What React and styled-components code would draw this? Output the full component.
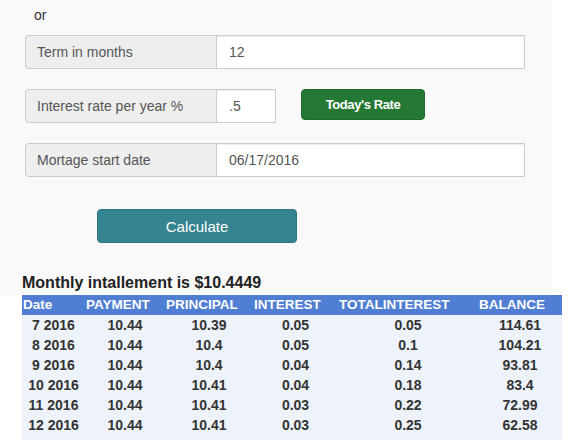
import React from 'react';
import styled, { createGlobalStyle } from 'styled-components';

const GlobalStyle = createGlobalStyle`
  html, body {
    margin: 0;
    padding: 0;
    background: #ffffff;
  }
  body {
    font-family: "Liberation Sans", Arial, sans-serif;
    font-size: 14px;
    line-height: 20px;
    color: #333;
  }
`;

const Panel = styled.div`
  width: 552px;
  background-color: #f9f9f9;
  padding: 5px 0 3px 0;
  box-sizing: border-box;
`;

const OrText = styled.div`
  margin-left: 34px;
  height: 20px;
`;

const Form = styled.div`
  display: flex;
  flex-direction: column;
  gap: 20px;
  margin: 10px 0 0 25px;
`;

const Row = styled.div`
  display: flex;
  align-items: center;
`;

const InputGroup = styled.div`
  display: flex;
  height: 34px;
  width: ${(p) => p.width}px;
  box-sizing: border-box;
`;

const Addon = styled.span`
  display: flex;
  align-items: center;
  width: 191px;
  flex: none;
  box-sizing: border-box;
  padding: 0 11px;
  background-color: #eeeeee;
  border: 1px solid #cccccc;
  border-right: none;
  border-radius: 4px 0 0 4px;
  color: #555;
  font-size: 14px;
`;

const Field = styled.div`
  display: flex;
  align-items: center;
  flex: 1;
  box-sizing: border-box;
  padding: 0 12px;
  background-color: #ffffff;
  border: 1px solid #cccccc;
  color: #555;
  font-size: 14px;
  box-shadow: inset 0 1px 1px rgba(0, 0, 0, 0.075);
`;

const RateButton = styled.button`
  margin-left: 25px;
  width: 124px;
  height: 31px;
  align-self: flex-start;
  background-color: #257833;
  border: 1px solid #1f6a2c;
  border-radius: 4px;
  color: #ffffff;
  font-family: "Liberation Sans", Arial, sans-serif;
  font-weight: bold;
  font-size: 13px;
  letter-spacing: -0.4px;
  cursor: pointer;
`;

const CalcButton = styled.button`
  display: block;
  margin: 32px 0 0 97px;
  width: 200px;
  height: 34px;
  background-color: #368491;
  border: 1px solid #2f7682;
  border-radius: 4px;
  color: #ffffff;
  font-family: "Liberation Sans", Arial, sans-serif;
  font-size: 15px;
  cursor: pointer;
`;

const Heading = styled.h4`
  margin: 31px 0 0 22px;
  font-size: 16px;
  line-height: 18px;
  font-weight: bold;
  color: #222;
`;

const Table = styled.table`
  margin: 0 0 0 22px;
  width: 540px;
  border-collapse: collapse;
  table-layout: fixed;
  background-color: #eef3fb;
`;

const HeadCell = styled.th`
  height: 20px;
  padding: 0 1px;
  background-color: #4f7ed2;
  color: #ffffff;
  text-align: left;
  font-size: 13.5px;
  font-weight: bold;
  white-space: nowrap;
  overflow: hidden;
`;

const Cell = styled.td`
  height: 20px;
  padding: 0;
  text-align: center;
  font-size: 14px;
  font-weight: bold;
  color: #333;
`;

const columns = [
  { label: 'Date', width: 63 },
  { label: 'PAYMENT', width: 80 },
  { label: 'PRINCIPAL', width: 88 },
  { label: 'INTEREST', width: 85 },
  { label: 'TOTALINTEREST', width: 140 },
  { label: 'BALANCE', width: 84 },
];

const rows = [
  ['7 2016', '10.44', '10.39', '0.05', '0.05', '114.61'],
  ['8 2016', '10.44', '10.4', '0.05', '0.1', '104.21'],
  ['9 2016', '10.44', '10.4', '0.04', '0.14', '93.81'],
  ['10 2016', '10.44', '10.41', '0.04', '0.18', '83.4'],
  ['11 2016', '10.44', '10.41', '0.03', '0.22', '72.99'],
  ['12 2016', '10.44', '10.41', '0.03', '0.25', '62.58'],
  ['1 2017', '10.44', '10.42', '0.02', '0.27', '52.16'],
];

const App = () => {
  return (
    <>
      <GlobalStyle />
      <Panel>
        <OrText>or</OrText>
        <Form>
          <InputGroup width={500}>
            <Addon>Term in months</Addon>
            <Field>12</Field>
          </InputGroup>
          <Row>
            <InputGroup width={251}>
              <Addon>Interest rate per year %</Addon>
              <Field>.5</Field>
            </InputGroup>
            <RateButton>Today's Rate</RateButton>
          </Row>
          <InputGroup width={500}>
            <Addon>Mortage start date</Addon>
            <Field>06/17/2016</Field>
          </InputGroup>
        </Form>
        <CalcButton>Calculate</CalcButton>
        <Heading>Monthly intallement is $10.4449</Heading>
      </Panel>
      <Table>
        <colgroup>
          {columns.map((c) => (
            <col key={c.label} style={{ width: c.width }} />
          ))}
        </colgroup>
        <thead>
          <tr>
            {columns.map((c) => (
              <HeadCell key={c.label}>{c.label}</HeadCell>
            ))}
          </tr>
        </thead>
        <tbody>
          {rows.map((r) => (
            <tr key={r[0]}>
              {r.map((v, i) => (
                <Cell key={i}>{v}</Cell>
              ))}
            </tr>
          ))}
        </tbody>
      </Table>
    </>
  );
};

export default App;
